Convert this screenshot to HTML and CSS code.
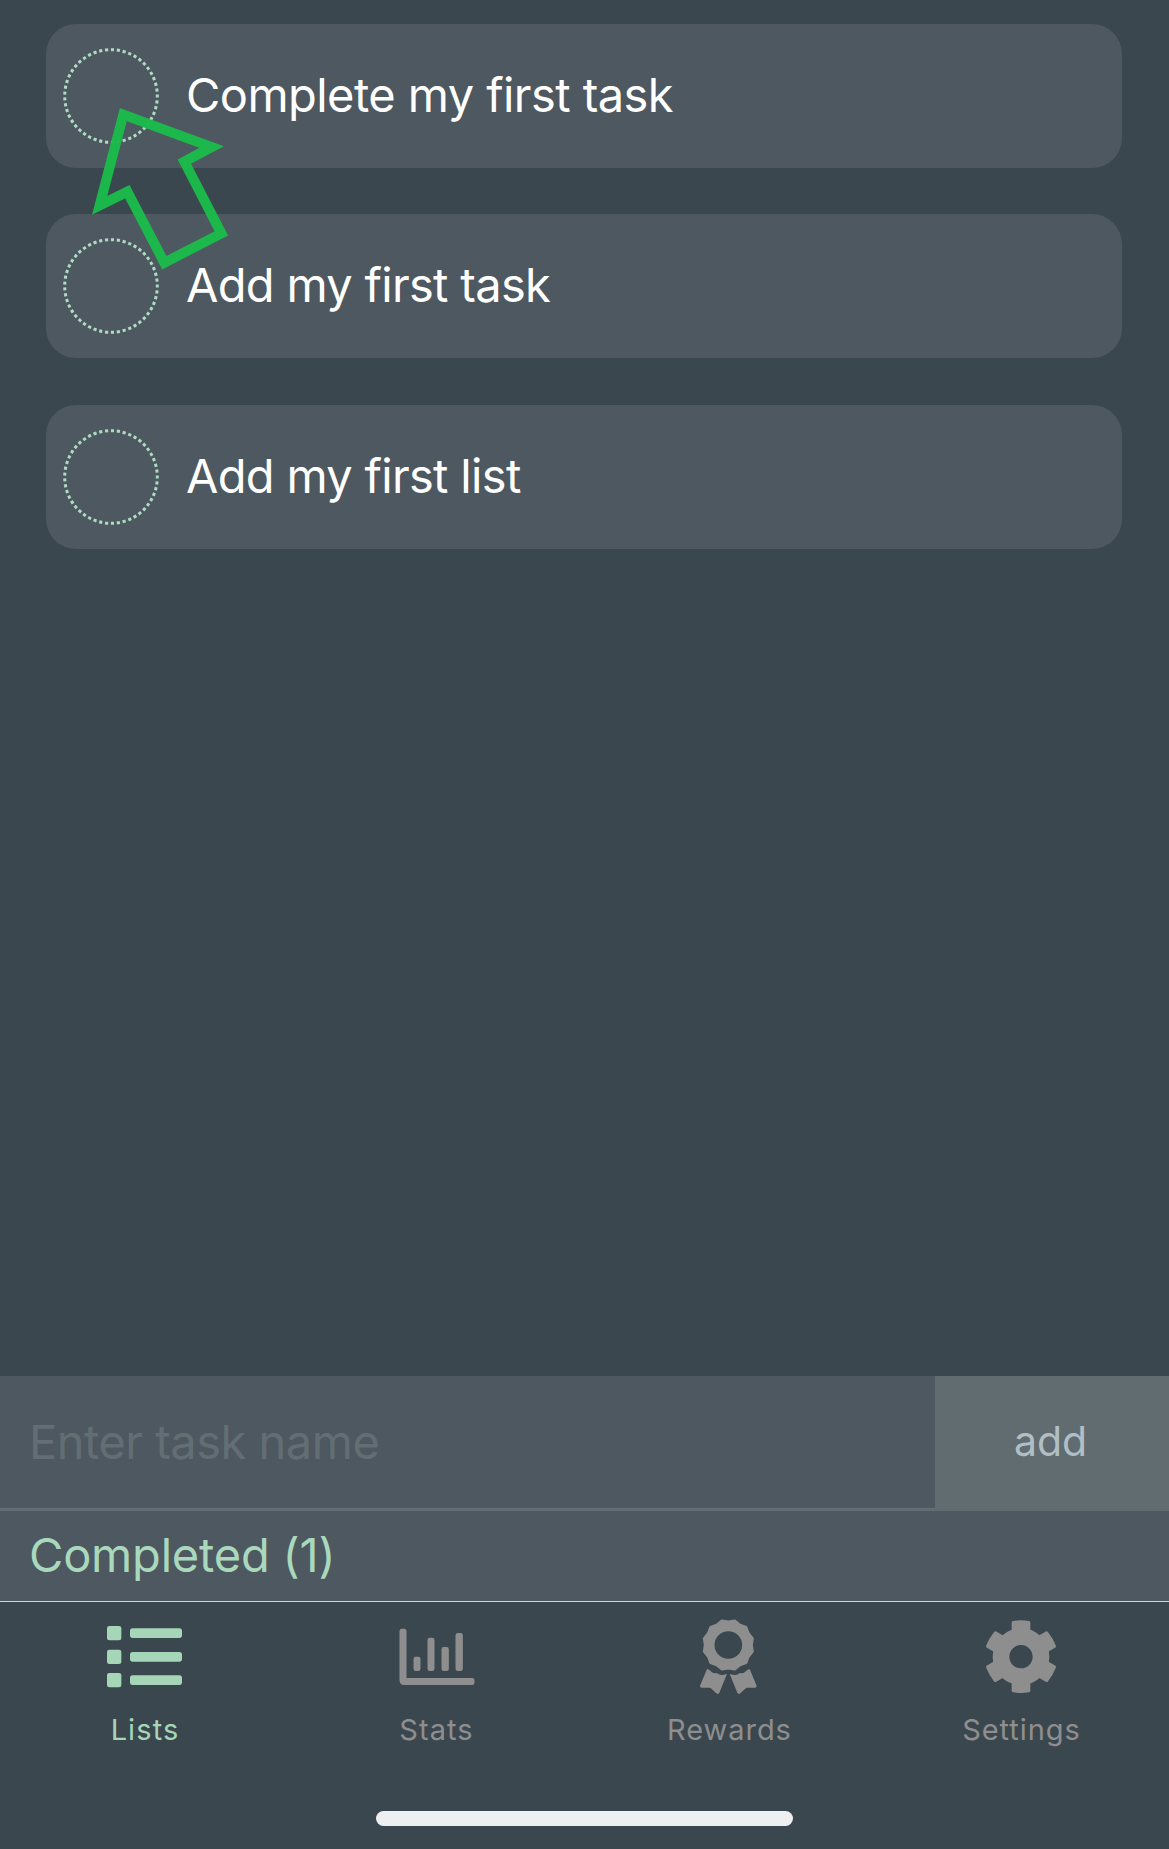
FILE: index.html
```html
<!DOCTYPE html>
<html lang="en">
<head>
<meta charset="utf-8">
<title>Lists</title>
<link rel="stylesheet" href="styles.css">
</head>
<body>
<main class="tasks">
  <div class="task">
    <svg class="check" viewBox="0 0 96 96"><circle cx="48" cy="48" r="46.3" pathLength="294"/></svg>
    <span class="task-name name-long">Complete my first task</span>
  </div>
  <div class="task">
    <svg class="check" viewBox="0 0 96 96"><circle cx="48" cy="48" r="46.3" pathLength="294"/></svg>
    <span class="task-name">Add my first task</span>
  </div>
  <div class="task task-last">
    <svg class="check" viewBox="0 0 96 96"><circle cx="48" cy="48" r="46.3" pathLength="294"/></svg>
    <span class="task-name">Add my first list</span>
  </div>
  <svg class="pointer" viewBox="180 288 417 495"><path d="M280 314 545 411 463 455 574 670 403 758 292 545 209 586Z"/></svg>
</main>
<form class="entry">
  <input class="entry-input" type="text" placeholder="Enter task name">
  <button class="entry-add" type="button">add</button>
</form>
<div class="completed">Completed (1)</div>
<nav class="tabs">
  <a class="tab active">
    <svg class="tab-icon" viewBox="51 72 228 228">
      <rect x="51" y="93" width="43" height="43" rx="7"/><rect x="120" y="100" width="156" height="29" rx="8"/>
      <rect x="51" y="164" width="43" height="43" rx="7"/><rect x="120" y="171" width="156" height="29" rx="8"/>
      <rect x="51" y="234" width="43" height="43" rx="7"/><rect x="120" y="241" width="156" height="29" rx="8"/>
    </svg>
    <span class="tab-label">Lists</span>
  </a>
  <a class="tab">
    <svg class="tab-icon" viewBox="58.5 72 228 228">
      <path d="M67 101H74Q81 101 81 108V249H278Q285 249 285 256V263Q285 270 278 270H74Q60 270 60 256V108Q60 101 67 101Z"/>
      <rect x="102" y="185" width="21" height="43" rx="7"/><rect x="144" y="128" width="21" height="100" rx="7"/>
      <rect x="186" y="156" width="22" height="72" rx="7"/><rect x="228" y="114" width="22" height="114" rx="7"/>
    </svg>
    <span class="tab-label">Stats</span>
  </a>
  <a class="tab">
    <svg class="tab-icon" viewBox="126 72 228 228">
      <path class="rosette" fill-rule="evenodd" transform="translate(238 150)" d="M70 0 73 19.6 60.6 35 53.5 53.5 35 60.6 19.6 73 0 70-19.6 73-35 60.6-53.5 53.5-60.6 35-73 19.6-70 0-73-19.6-60.6-35-53.5-53.5-35-60.6-19.6-73 0-70 19.6-73 35-60.6 53.5-53.5 60.6-35 73-19.6ZM45 0A45 45 0 1 0-45 0A45 45 0 1 0 45 0Z"/>
      <path d="M174 222Q182 224 188 231Q194 236 203 234Q212 241 221 240L234 237 211 293Q207 301 201 294L184 278 158 278Q151 277 154 270Z"/>
      <path d="M302 222Q294 224 288 231Q282 236 273 234Q264 241 255 240L242 237 265 293Q269 301 275 294L292 278 318 278Q325 277 322 270Z"/>
    </svg>
    <span class="tab-label label-wide">Rewards</span>
  </a>
  <a class="tab">
    <svg class="tab-icon" viewBox="133.5 72 228 228">
      <g transform="translate(247.5 185)">
        <circle class="gear-ring" r="60"/>
        <path id="tooth" d="M-28-75V-102Q-28-106-24-107Q0-111 24-107Q28-106 28-102V-75Z"/>
        <use href="#tooth" transform="rotate(60)"/><use href="#tooth" transform="rotate(120)"/>
        <use href="#tooth" transform="rotate(180)"/><use href="#tooth" transform="rotate(240)"/>
        <use href="#tooth" transform="rotate(300)"/>
      </g>
    </svg>
    <span class="tab-label label-wide">Settings</span>
  </a>
</nav>
<div class="home-bar"><div class="home-indicator"></div></div>
</body>
</html>
```
FILE: styles.css
```css
* { box-sizing: border-box; }

body {
  margin: 0;
  height: 1849px;
  display: flex;
  flex-direction: column;
  background: #3b474e;
  color: #fff;
  font-family: Inter, "Liberation Sans", sans-serif;
  overflow: hidden;
}

.tasks {
  position: relative;
  flex: 1;
  display: flex;
  flex-direction: column;
  gap: 46px;
  padding: 24px 47px 0 46px;
}

.task {
  display: flex;
  align-items: center;
  gap: 27px;
  height: 144px;
  padding-left: 17px;
  border-radius: 30px;
  background: #4e5860;
}
.task-last { margin-top: 1px; }

.check { width: 96px; height: 96px; }
.check circle {
  fill: none;
  stroke: #aedcc2;
  stroke-width: 3;
  stroke-dasharray: 3.2 2.8;
  stroke-dashoffset: 1.6;
}

.task-name {
  padding-bottom: 3px;
  font-size: 47px;
  letter-spacing: -0.68px;
}
.name-long { letter-spacing: -0.56px; }

.pointer {
  position: absolute;
  left: 90px;
  top: 106px;
  width: 139px;
  height: 165px;
}
.pointer path {
  fill: none;
  stroke: #1bbb4b;
  stroke-width: 30;
  stroke-miterlimit: 10;
  opacity: 0.97;
}

.entry { display: flex; height: 135px; }

.entry-input {
  flex: 1;
  min-width: 0;
  padding: 0 29px 2px;
  border: 0;
  border-bottom: 3px solid #626c73;
  border-radius: 0;
  background: #4e5860;
  color: #fff;
  font: 47px Inter, "Liberation Sans", sans-serif;
  letter-spacing: -0.5px;
}
.entry-input::placeholder { color: #626e73; opacity: 1; }

.entry-add {
  width: 234px;
  padding: 0 0 5px;
  border: 0;
  background: #616c71;
  color: #b0bec5;
  font: 41px Inter, "Liberation Sans", sans-serif;
  text-indent: -3px;
}

.completed {
  height: 91px;
  padding: 0 29px 2px;
  border-bottom: 1px solid #c9d9dd;
  background: #4e5860;
  color: #a9d8bd;
  font-size: 47px;
  line-height: 88px;
  letter-spacing: -0.2px;
}

.tabs {
  display: grid;
  grid-template-columns: 290px 293px 292px 292px;
  height: 209px;
  padding-top: 17px;
}

.tab {
  display: flex;
  flex-direction: column;
  align-items: center;
  gap: 17px;
  color: #8e8e8f;
}
.tab.active { color: #a5d6b7; }

.tab-icon { width: 76px; height: 76px; fill: currentColor; }
.rosette { stroke: currentColor; stroke-width: 7; stroke-linejoin: round; }
.gear-ring { fill: none; stroke: currentColor; stroke-width: 50; }

.tab-label { font-size: 29px; line-height: 36px; letter-spacing: 1.1px; }
.label-wide { padding-left: 1px; letter-spacing: 0.95px; }

.home-bar { display: flex; justify-content: center; height: 38px; }
.home-indicator { width: 417px; height: 15px; border-radius: 8px; background: #eeeff0; }
```
